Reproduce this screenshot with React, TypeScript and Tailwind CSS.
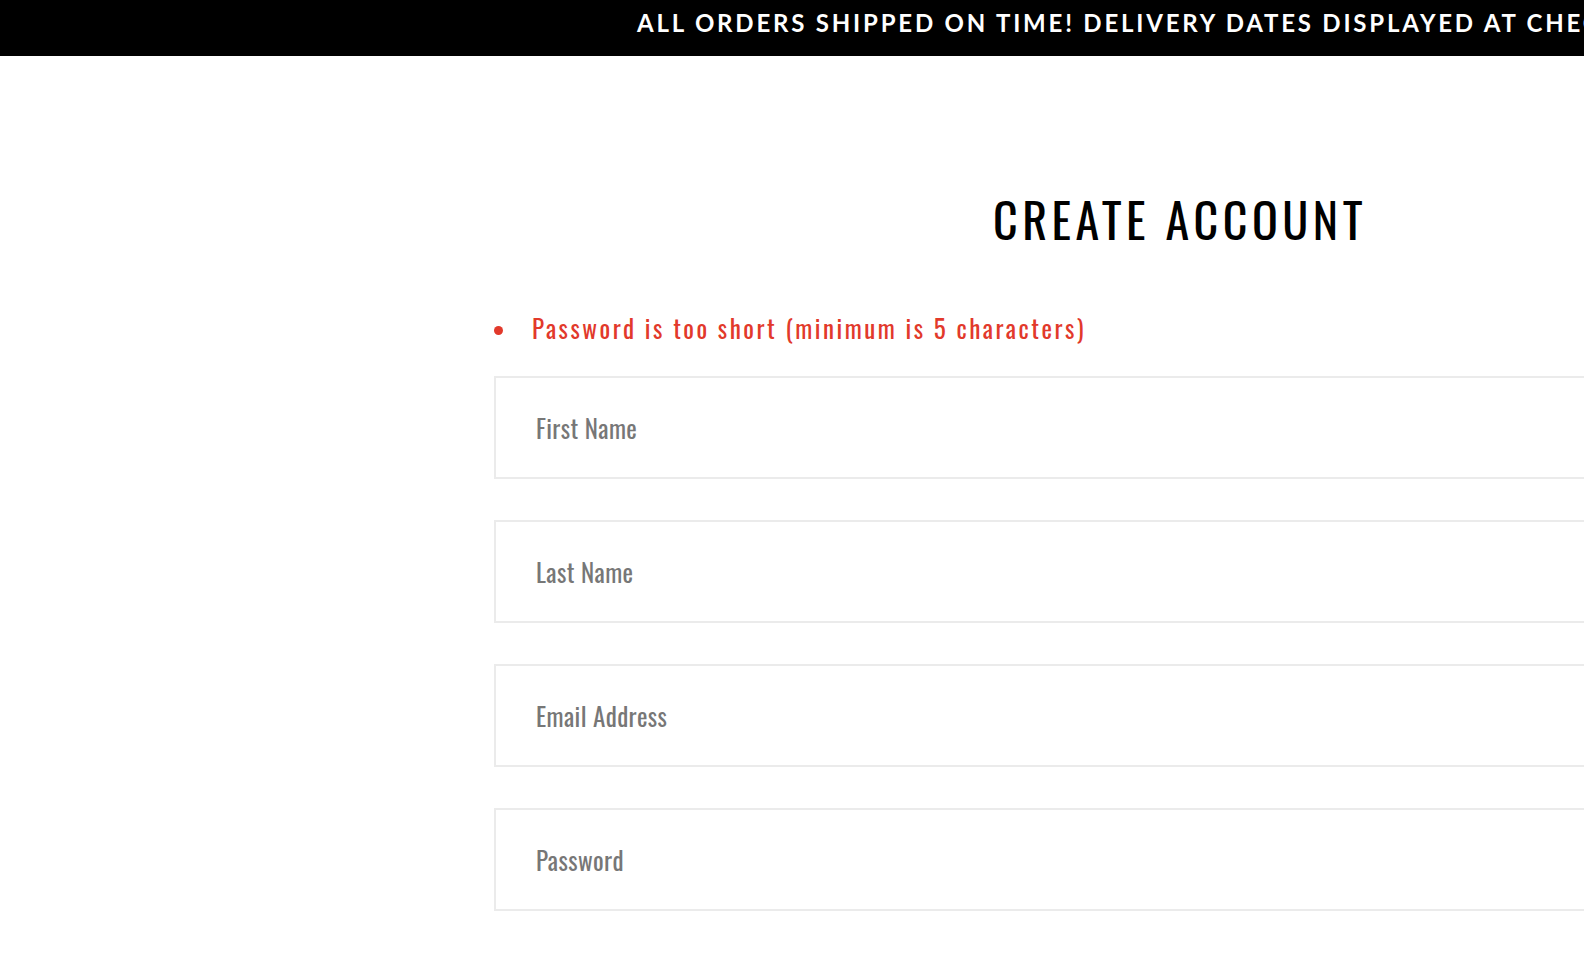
const FIELDS = ["First Name", "Last Name", "Email Address", "Password"];

const condensed = "font-['Oswald','Liberation_Sans_Narrow','DejaVu_Sans_Condensed',sans-serif]";

export default function App() {
  return (
    <div className="h-[964px] w-full overflow-hidden bg-white">
      {/* announcement bar */}
      <div className="flex h-[56px] items-start overflow-hidden bg-black pl-[637px] pt-[11px]">
        <p className="whitespace-nowrap font-['Lato',sans-serif] text-[24px] font-bold uppercase leading-[23px] tracking-[2.8px] text-white">
          All orders shipped on time! Delivery dates displayed at checkout.
        </p>
      </div>

      <main className="pl-[494px] pt-[131px]">
        <div className="w-[1372px]">
          <h1 className={`${condensed} text-center text-[48px] leading-[64px] tracking-[4.5px] text-black`}>
            CREATE ACCOUNT
          </h1>

          <ul className="mt-[62px]">
            <li className="flex items-center">
              <span className="mt-[4px] h-[9px] w-[9px] rounded-full bg-[#e2392b]" />
              <span className={`${condensed} ml-[29px] text-[25px] leading-[30px] tracking-[2.5px] text-[#e2392b]`}>
                Password is too short (minimum is 5 characters)
              </span>
            </li>
          </ul>

          <form className="mt-[33px] flex flex-col gap-[41px]">
            {FIELDS.map((f) => (
              <div key={f} className="flex h-[103px] items-center border-2 border-[#ebebeb] pl-[40px]">
                <span className={`${condensed} text-[25px] leading-[30px] tracking-[0.4px] text-[#777777]`}>{f}</span>
              </div>
            ))}
          </form>
        </div>
      </main>
    </div>
  );
}
